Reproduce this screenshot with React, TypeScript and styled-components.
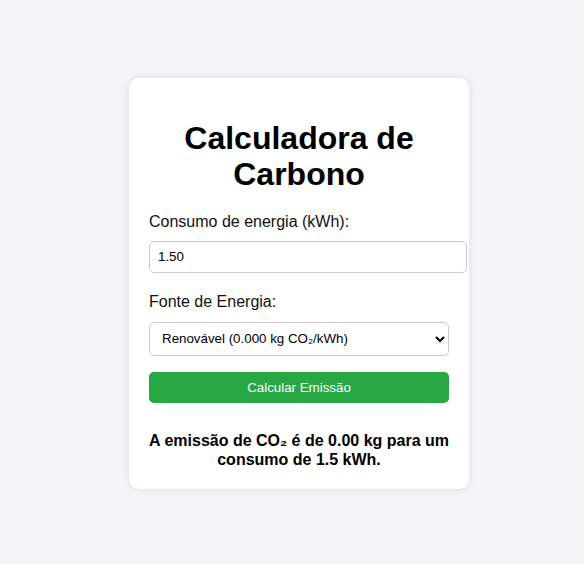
import React, { useState } from "react";
import styled, { createGlobalStyle } from "styled-components";

const Global = createGlobalStyle`
  html, body { margin: 0; padding: 0; }
  body {
    background: #f4f4f9;
    font-family: "Liberation Sans", Arial, sans-serif;
  }
`;

const Page = styled.div`
  min-height: 100vh;
  box-sizing: border-box;
  display: flex;
  align-items: center;
  justify-content: center;
  padding: 3px 0 0 14px;
`;

const Card = styled.div`
  width: 300px;
  padding: 20px;
  background: #fff;
  border-radius: 10px;
  box-shadow: 0 0 10px rgba(0, 0, 0, 0.1);
`;

const Title = styled.h1`
  font-size: 32px;
  line-height: 36px;
  font-weight: bold;
  text-align: center;
  color: #000;
  margin: 22px 0 20.7px;
`;

const Label = styled.label<{ $gap: number }>`
  display: block;
  font-size: 16px;
  line-height: 18.4px;
  color: #111;
  margin-bottom: ${(p) => p.$gap}px;
`;

const Input = styled.input`
  display: block;
  width: 100%;
  padding: 8px;
  margin: 0 0 19.4px;
  border: 1px solid #ccc;
  border-radius: 5px;
  font-family: "Liberation Sans", Arial, sans-serif;
  font-size: 13.33px;
  line-height: 14.3px;
  color: #000;
`;

const Select = styled.select`
  display: block;
  width: 100%;
  height: 33.7px;
  padding: 0 8px;
  margin: 0 0 16px;
  border: 1px solid #ccc;
  border-radius: 5px;
  background: #fff;
  font-family: "Liberation Sans", Arial, sans-serif;
  font-size: 13.33px;
  color: #000;
`;

const Button = styled.button`
  display: block;
  width: 100%;
  height: 31px;
  padding: 0 8px;
  border: none;
  border-radius: 5px;
  background: #28a745;
  color: #fff;
  font-family: "Liberation Sans", Arial, sans-serif;
  font-size: 13.33px;
  cursor: pointer;
`;

const Result = styled.div`
  margin-top: 29.7px;
  text-align: center;
  font-weight: bold;
  font-size: 16px;
  line-height: 18.4px;
  color: #000;
`;

export default function App() {
  const [kwh, setKwh] = useState("1.50");
  const [src, setSrc] = useState("0");
  return (
    <>
      <Global />
      <Page>
        <Card>
          <Title>Calculadora de Carbono</Title>
          <Label htmlFor="kwh" $gap={10}>Consumo de energia (kWh):</Label>
          <Input id="kwh" type="text" value={kwh} onChange={(e) => setKwh(e.target.value)} />
          <Label htmlFor="src" $gap={11}>Fonte de Energia:</Label>
          <Select id="src" value={src} onChange={(e) => setSrc(e.target.value)}>
            <option value="0">Renovável (0.000 kg CO₂/kWh)</option>
            <option value="0.5">Não renovável (0.500 kg CO₂/kWh)</option>
          </Select>
          <Button>Calcular Emissão</Button>
          <Result>A emissão de CO₂ é de 0.00 kg para um consumo de 1.5 kWh.</Result>
        </Card>
      </Page>
    </>
  );
}
